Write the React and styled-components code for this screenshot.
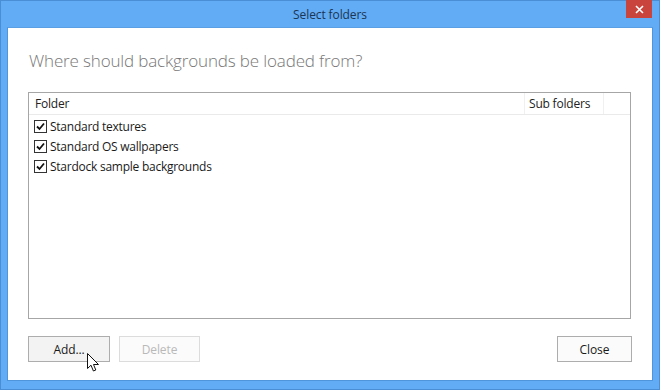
import React from "react";
import styled, { createGlobalStyle } from "styled-components";

const GlobalStyle = createGlobalStyle`
  html, body {
    margin: 0;
    padding: 0;
    width: 660px;
    height: 390px;
    overflow: hidden;
    background: #62acf6;
  }
  * { box-sizing: border-box; }
`;

const Frame = styled.div`
  position: relative;
  width: 660px;
  height: 390px;
  background: #62acf6;
  border: 1px solid #4a8fd6;
  display: flex;
  flex-direction: column;
  font-family: "Open Sans", "Noto Sans", sans-serif;
`;

const TitleBar = styled.div`
  height: 26px;
  display: flex;
  align-items: center;
  justify-content: center;
  position: relative;
`;

const Title = styled.span`
  font-size: 12px;
  color: #1b3552;
  letter-spacing: -0.1px;
`;

const CloseX = styled.div`
  position: absolute;
  top: -1px;
  right: 7px;
  width: 26px;
  height: 18px;
  background: #c8443c;
  display: flex;
  align-items: center;
  justify-content: center;
`;

const Client = styled.div`
  flex: 1;
  margin: 0 6px 8px 6px;
  background: #fff;
  border: 1px solid #4f95dc;
  border-top-color: #5a9fe4;
  padding: 22px 20px 18px 20px;
  display: flex;
  flex-direction: column;
`;

const Heading = styled.h1`
  margin: 0 0 0 1px;
  font-weight: 300;
  font-size: 17px;
  color: #777;
  letter-spacing: -0.15px;
  line-height: 22px;
`;

const ListBox = styled.div`
  margin-top: 20px;
  height: 227px;
  width: 603px;
  border: 1px solid #a6a6a6;
  display: flex;
  flex-direction: column;
`;

const HeaderRow = styled.div`
  height: 22px;
  display: grid;
  grid-template-columns: 495px 79px 1fr;
  border-bottom: 1px solid #eaeaea;
`;

const HeaderCell = styled.div`
  font-size: 12px;
  color: #222;
  padding-left: ${p => p.$pad || 6}px;
  display: flex;
  align-items: center;
  border-left: ${p => (p.$divider ? "1px solid #f0f0f0" : "none")};
  letter-spacing: -0.2px;
`;

const Rows = styled.div`
  display: flex;
  flex-direction: column;
  padding: 1px 0 0 5px;
`;

const Row = styled.div`
  height: 20px;
  display: flex;
  align-items: center;
  gap: 3px;
  font-size: 12px;
  color: #1a1a1a;
  letter-spacing: -0.25px;
`;

const Box = styled.span`
  width: 13px;
  height: 13px;
  border: 1px solid #333;
  background: #fff;
  display: flex;
  align-items: center;
  justify-content: center;
`;

const Footer = styled.div`
  margin-top: 17px;
  display: flex;
  align-items: center;
  width: 604px;
`;

const Button = styled.button`
  position: relative;
  width: ${p => p.$w}px;
  height: 26px;
  margin-right: 9px;
  font-family: "Open Sans", "Noto Sans", sans-serif;
  font-size: 12px;
  letter-spacing: -0.1px;
  color: ${p => (p.disabled ? "#b9b9b9" : "#1a1a1a")};
  background: ${p => (p.$hover ? "#f3f3f3" : "#fbfbfb")};
  border: 1px solid ${p => (p.disabled ? "#dcdcdc" : "#adadad")};
  padding: 0;
  &:last-child {
    margin-left: auto;
    margin-right: 0;
  }
`;

const Pointer = styled.svg`
  position: absolute;
  left: 58px;
  top: 16px;
`;

const Check = () => (
  <svg width="9" height="9" viewBox="0 0 9 9">
    <path d="M1 4.5 L3.5 7 L8 1.5" fill="none" stroke="#111" strokeWidth="1.8" />
  </svg>
);

const folders = ["Standard textures", "Standard OS wallpapers", "Stardock sample backgrounds"];

export default function App() {
  return (
    <>
      <GlobalStyle />
      <Frame>
        <TitleBar>
          <Title>Select folders</Title>
          <CloseX>
            <svg width="9" height="9" viewBox="0 0 9 9">
              <path d="M1 1 L8 8 M8 1 L1 8" stroke="#fff" strokeWidth="1.6" />
            </svg>
          </CloseX>
        </TitleBar>
        <Client>
          <Heading>Where should backgrounds be loaded from?</Heading>
          <ListBox>
            <HeaderRow>
              <HeaderCell>Folder</HeaderCell>
              <HeaderCell $divider $pad={4}>Sub folders</HeaderCell>
              <HeaderCell $divider />
            </HeaderRow>
            <Rows>
              {folders.map(f => (
                <Row key={f}>
                  <Box><Check /></Box>
                  {f}
                </Row>
              ))}
            </Rows>
          </ListBox>
          <Footer>
            <Button $w={82} $hover>
              Add...
              <Pointer width="13" height="20" viewBox="0 0 13 20">
                <path
                  d="M0.5 0.5 L0.5 15.5 L4 12.2 L6.4 18 L8.8 17 L6.5 11.5 L11.5 11.5 Z"
                  fill="#fff"
                  stroke="#111"
                  strokeWidth="1"
                  strokeLinejoin="round"
                />
              </Pointer>
            </Button>
            <Button $w={81} disabled>Delete</Button>
            <Button $w={75}>Close</Button>
          </Footer>
        </Client>
      </Frame>
    </>
  );
}
